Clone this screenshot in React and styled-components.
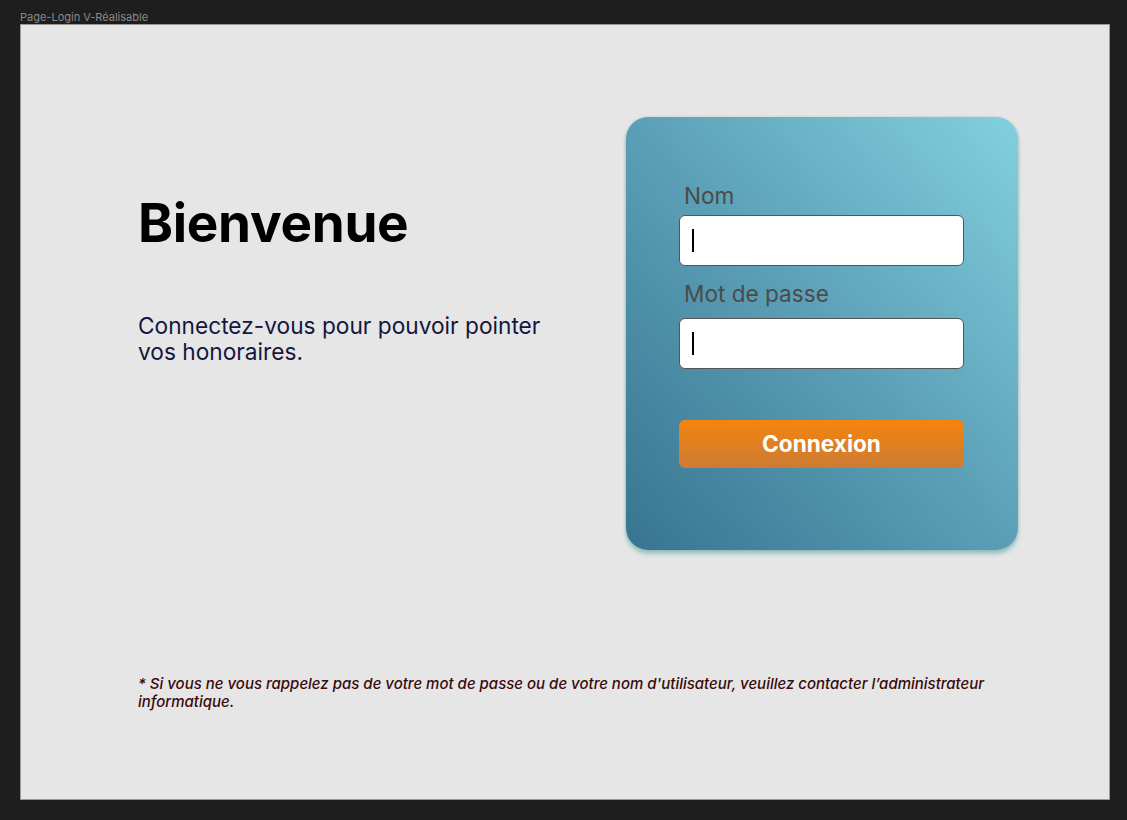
import React from 'react';
import styled, { createGlobalStyle } from 'styled-components';

const GlobalStyle = createGlobalStyle`
  html, body {
    margin: 0;
    padding: 0;
    background: #1e1e1e;
  }
  body {
    font-family: Inter, "Noto Sans", sans-serif;
  }
`;

const Page = styled.div`
  width: 1127px;
  height: 820px;
  padding-left: 20px;
  box-sizing: border-box;
`;

const FrameLabel = styled.div`
  height: 24px;
  box-sizing: border-box;
  padding-top: 10px;
  font-size: 11px;
  line-height: 14px;
  color: #8a8a8a;
`;

const Frame = styled.div`
  width: 1090px;
  height: 776px;
  box-sizing: border-box;
  background: #e6e6e6;
  border: 1px solid #9a9a9a;
  padding: 92px 0 0 117px;
  display: flex;
  flex-direction: column;
`;

const Row = styled.div`
  display: flex;
  align-items: flex-start;
`;

const Intro = styled.div`
  width: 488px;
  padding-top: 73px;
`;

const Title = styled.h1`
  margin: 0;
  font-size: 53px;
  line-height: 66px;
  letter-spacing: -0.3px;
  font-weight: 700;
  color: #000;
`;

const Subtitle = styled.p`
  margin: 57px 0 0;
  max-width: 430px;
  font-size: 22.7px;
  line-height: 26px;
  color: #15163f;
`;

const Card = styled.div`
  width: 392px;
  height: 433px;
  box-sizing: border-box;
  border-radius: 22px;
  padding: 66px 0 0 53px;
  background: linear-gradient(to top right, #387490 0%, #5b9fb6 50%, #82d0df 100%);
  box-shadow: 0 4px 4px rgba(60, 150, 150, 0.45), 0 0 3px rgba(0, 0, 0, 0.15);
`;

const Field = styled.div`
  display: flex;
  flex-direction: column;
  margin-top: ${(p) => p.$top || 0}px;
`;

const Label = styled.label`
  padding-left: 5px;
  font-size: 22.6px;
  line-height: 26px;
  color: #4b4b4b;
  margin-bottom: ${(p) => p.$gap}px;
`;

const InputBox = styled.div`
  width: 285px;
  height: 51px;
  box-sizing: border-box;
  background: #fff;
  border: 1px solid #555;
  border-radius: 6px;
  display: flex;
  align-items: center;
  padding-left: 12px;
`;

const Caret = styled.span`
  width: 2px;
  height: 23px;
  background: #000;
`;

const Button = styled.button`
  margin-top: 51px;
  width: 285px;
  height: 48px;
  border: none;
  border-radius: 6px;
  background: linear-gradient(180deg, #f5840c 0%, #cc7b35 100%);
  color: #fff;
  font-family: Inter, sans-serif;
  font-size: 22.6px;
  font-weight: 700;
  padding: 0 0 2px;
  cursor: pointer;
`;

const Note = styled.p`
  margin: 125px 0 0;
  width: 870px;
  font-size: 15px;
  line-height: 18px;
  font-style: italic;
  font-weight: 500;
  color: #3a0a0c;
`;

export default function App() {
  return (
    <Page>
      <GlobalStyle />
      <FrameLabel>Page-Login V-Réalisable</FrameLabel>
      <Frame>
        <Row>
          <Intro>
            <Title>Bienvenue</Title>
            <Subtitle>Connectez-vous pour pouvoir pointer vos honoraires.</Subtitle>
          </Intro>
          <Card>
            <Field>
              <Label $gap={6}>Nom</Label>
              <InputBox><Caret /></InputBox>
            </Field>
            <Field $top={15}>
              <Label $gap={11}>Mot de passe</Label>
              <InputBox><Caret /></InputBox>
            </Field>
            <Button>Connexion</Button>
          </Card>
        </Row>
        <Note>
          * Si vous ne vous rappelez pas de votre mot de passe ou de votre nom d'utilisateur, veuillez contacter l’administrateur informatique.
        </Note>
      </Frame>
    </Page>
  );
}
